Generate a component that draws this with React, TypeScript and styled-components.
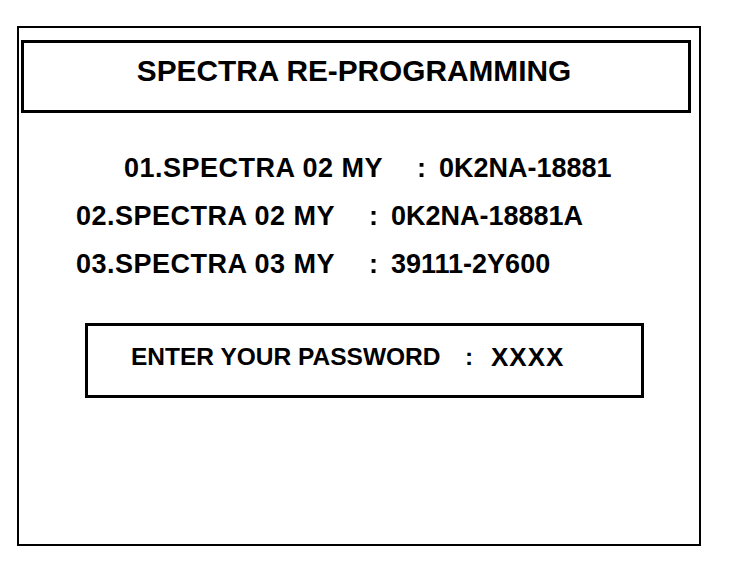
import React from 'react'
import styled, { createGlobalStyle } from 'styled-components'

const GlobalStyle = createGlobalStyle`
  body {
    margin: 0;
    background: #fff;
    font-family: 'Liberation Sans', Arial, sans-serif;
    color: #000;
  }
`

const Frame = styled.div`
  box-sizing: border-box;
  width: 684px;
  height: 520px;
  margin: 26px 0 0 17px;
  border: 2px solid #000;
  padding: 12px 8px 0 2px;
`

const Header = styled.div`
  box-sizing: border-box;
  height: 73px;
  border: 3px solid #000;
  display: flex;
  justify-content: center;
  padding: 12px 4px 0 0;
`

const Title = styled.h1`
  margin: 0;
  font-size: 29.8px;
  font-weight: 700;
  line-height: 32px;
`

const List = styled.div`
  display: flex;
  flex-direction: column;
  gap: 21px;
  margin: 42px 0 0 55px;
`

const Row = styled.div<{ shift?: number }>`
  display: grid;
  grid-template-columns: 293px 22px auto;
  align-items: center;
  margin-left: ${({ shift }) => shift || 0}px;
  font-size: 27px;
  font-weight: 700;
  line-height: 27px;
`

const Label = styled.span`
  letter-spacing: 0.5px;
`

const Colon = styled.span``

const PasswordBox = styled.div`
  box-sizing: border-box;
  width: 559px;
  height: 75px;
  margin: 45px 0 0 64px;
  border: 3px solid #000;
  display: grid;
  grid-template-columns: 334px 26px auto;
  align-items: center;
  padding: 0 0 7px 43px;
  font-size: 24.5px;
  font-weight: 700;
`

const Masked = styled.span`
  font-size: 26px;
  letter-spacing: 1px;
`

const models = [
  { name: '01.SPECTRA 02 MY', code: '0K2NA-18881', shift: 48 },
  { name: '02.SPECTRA 02 MY', code: '0K2NA-18881A' },
  { name: '03.SPECTRA 03 MY', code: '39111-2Y600' },
]

export default function App() {
  return (
    <>
      <GlobalStyle />
      <Frame>
        <Header>
          <Title>SPECTRA RE-PROGRAMMING</Title>
        </Header>
        <List>
          {models.map((m) => (
            <Row key={m.name} shift={m.shift}>
              <Label>{m.name}</Label>
              <Colon>:</Colon>
              <span>{m.code}</span>
            </Row>
          ))}
        </List>
        <PasswordBox>
          <span>ENTER YOUR PASSWORD</span>
          <Colon>:</Colon>
          <Masked>XXXX</Masked>
        </PasswordBox>
      </Frame>
    </>
  )
}
